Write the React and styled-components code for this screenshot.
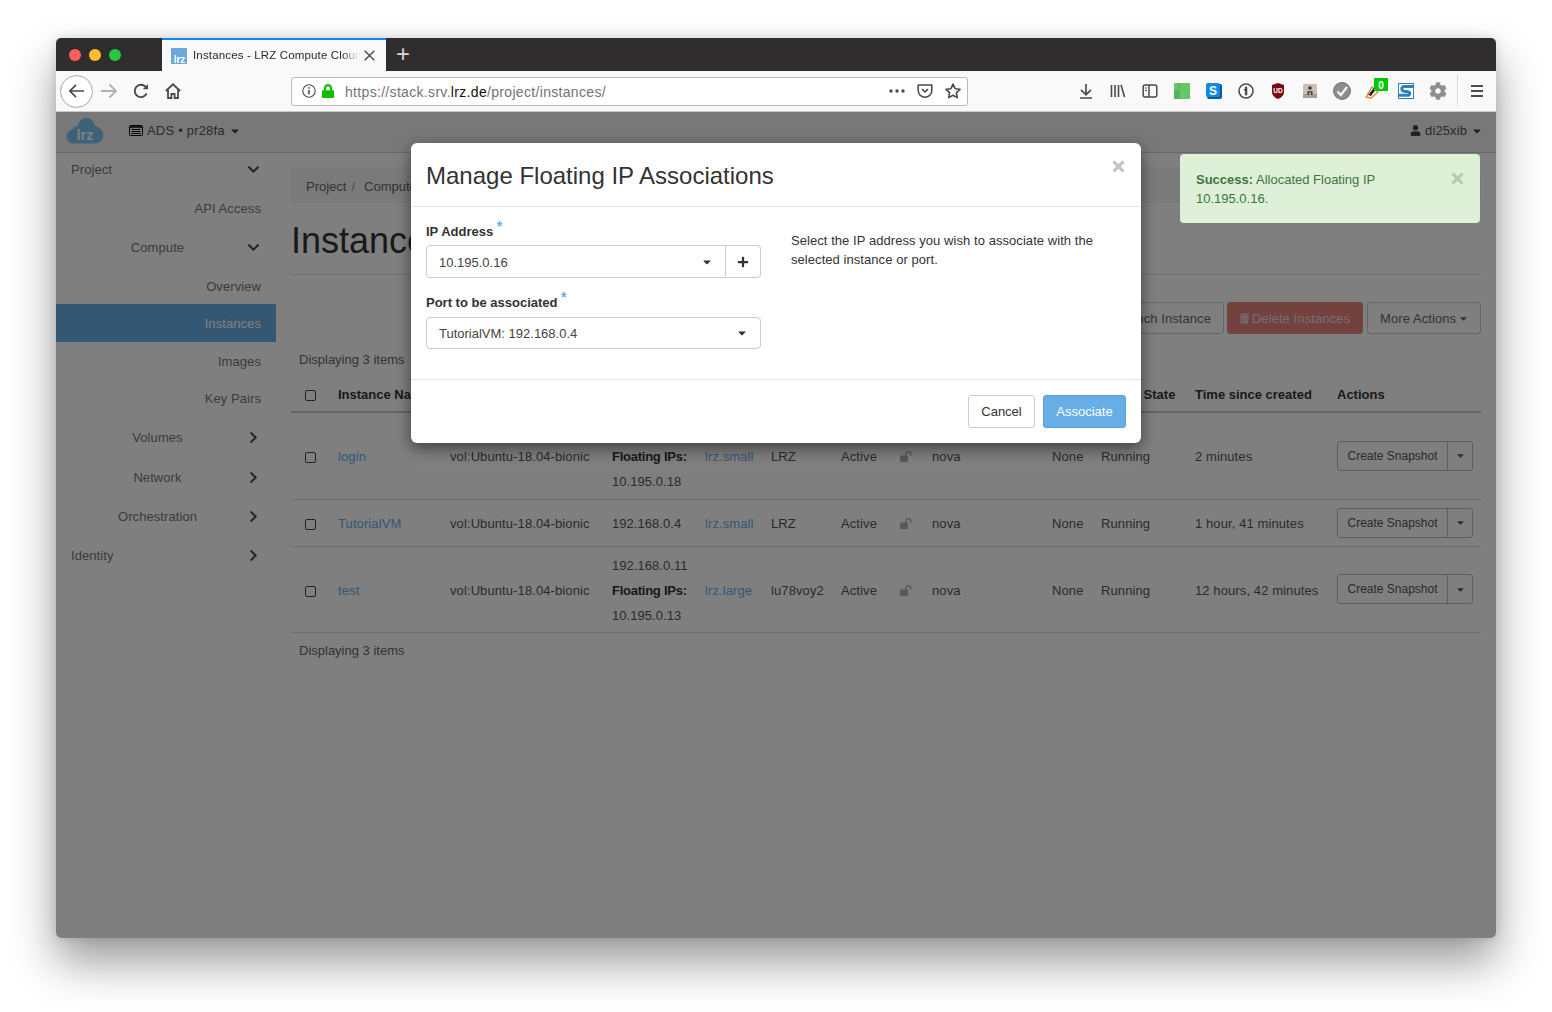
import React from 'react'
import styled, {createGlobalStyle} from 'styled-components'
import {
  FaCaretDown, FaChevronDown, FaChevronRight, FaCog, FaLock, FaPlus,
  FaTimes, FaTrashAlt, FaUser,
} from 'react-icons/fa'

const GlobalStyle = createGlobalStyle`
  html, body { margin: 0; padding: 0; background: #fff; }
  body { font-family: "Liberation Sans", Arial, sans-serif; font-size: 13px; color: #333; }
`

const sideItems = [
  {label: 'Project', align: 'left', icon: 'down', mt: 0},
  {label: 'API Access', align: 'right', mt: 7},
  {label: 'Compute', align: 'center', icon: 'down', mt: 7},
  {label: 'Overview', align: 'right', mt: 7},
  {label: 'Instances', align: 'right', active: true, mt: 2},
  {label: 'Images', align: 'right', mt: 3},
  {label: 'Key Pairs', align: 'right', mt: 5},
  {label: 'Volumes', align: 'center', icon: 'right', mt: 7},
  {label: 'Network', align: 'center', icon: 'right', mt: 8},
  {label: 'Orchestration', align: 'center', icon: 'right', mt: 7},
  {label: 'Identity', align: 'left', icon: 'right', mt: 7},
]

const instances = [
  {name: 'login', ip: ['192.168.0.3', 'Floating IPs:', '10.195.0.18'], size: 'lrz.small', key: 'LRZ', time: '2 minutes', h: 87},
  {name: 'TutorialVM', ip: ['192.168.0.4'], size: 'lrz.small', key: 'LRZ', time: '1 hour, 41 minutes', h: 47},
  {name: 'test', ip: ['192.168.0.11', 'Floating IPs:', '10.195.0.13'], size: 'lrz.large', key: 'lu78voy2', time: '12 hours, 42 minutes', h: 86},
]

const colWidths = [39, 112, 162, 93, 66, 70, 59, 32, 120, 49, 94, 142, 152]
const headers = ['', 'Instance Name', 'Image Name', 'IP Address', 'Size', 'Key Pair', 'Status', '', 'Availability Zone', 'Task', 'Power State', 'Time since created', 'Actions']

function BackIcon() {
  return <svg width="17" height="16" viewBox="0 0 18 16" fill="none" stroke="#4a4a4f" strokeWidth="1.8"><path d="M17 8H2M8.5 1.5 2 8l6.5 6.5" /></svg>
}
function ForwardIcon() {
  return <svg width="18" height="16" viewBox="0 0 18 16" fill="none" stroke="#b1b1b3" strokeWidth="1.8"><path d="M1 8h15M9.5 1.5 16 8l-6.5 6.5" /></svg>
}
function ReloadIcon() {
  return <svg width="16" height="16" viewBox="0 0 16 16" fill="none" stroke="#4a4a4f" strokeWidth="1.9"><path d="M13.6 10.5A6.2 6.2 0 1 1 12.4 3.6L14 5.4" /><path d="M15 1v5.2H9.8" fill="#4a4a4f" stroke="none" /></svg>
}
function HomeIcon() {
  return <svg width="16" height="16" viewBox="0 0 16 16" fill="none" stroke="#4a4a4f" strokeWidth="1.8"><path d="M.8 8 8 1.3 15.2 8" /><path d="M3 6.5V15h3.4v-4h3.2v4H13V6.5" /></svg>
}
function InfoIcon() {
  return <svg width="14" height="14" viewBox="0 0 14 14" fill="none" stroke="#4a4a4f" strokeWidth="1.1"><circle cx="7" cy="7" r="6.2" /><path d="M7 6v4.2" strokeWidth="1.6" /><path d="M7 3.2v1.6" strokeWidth="1.6" /></svg>
}
function DotsIcon() {
  return <svg width="16" height="4" viewBox="0 0 16 4" fill="#4a4a4f"><circle cx="2" cy="2" r="1.7" /><circle cx="8" cy="2" r="1.7" /><circle cx="14" cy="2" r="1.7" /></svg>
}
function PocketIcon() {
  return <svg width="16" height="16" viewBox="0 0 16 16" fill="none" stroke="#4a4a4f" strokeWidth="1.6"><path d="M1.2 2h13.6v5.5a6.8 6.8 0 0 1-13.6 0z" strokeLinejoin="round" /><path d="M5 6.2 8 9l3-2.8" /></svg>
}
function StarIcon() {
  return <svg width="16" height="16" viewBox="0 0 16 16" fill="none" stroke="#4a4a4f" strokeWidth="1.6" strokeLinejoin="round"><path d="m8 1.2 2.1 4.5 4.9.6-3.6 3.4.9 4.9L8 12.2l-4.3 2.4.9-4.9L1 6.3l4.9-.6z" /></svg>
}
function DownloadIcon() {
  return <svg width="16" height="16" viewBox="0 0 16 16" fill="none" stroke="#4a4a4f" strokeWidth="1.7"><path d="M8 1v10M3 6.8l5 5 5-5M2 15h12" /></svg>
}
function LibraryIcon() {
  return <svg width="16" height="16" viewBox="0 0 16 16" fill="none" stroke="#4a4a4f" strokeWidth="1.6"><path d="M1.5 2v12M5 2v12M8.5 2v12M11 2l3.6 12" /></svg>
}
function SidebarIcon() {
  return <svg width="16" height="16" viewBox="0 0 16 16" fill="none" stroke="#4a4a4f" strokeWidth="1.5"><rect x="1.2" y="2" width="13.6" height="12" rx="2" /><path d="M7 2v12" /><path d="M3 5h2M3 7.5h2" strokeWidth="1.2" /></svg>
}
function GreenExt() {
  return <svg width="16" height="16" viewBox="0 0 16 16"><rect width="16" height="16" fill="#66c766" /><rect x="0" y="7" width="5" height="9" fill="#53b653" /><path d="M5 0v16" stroke="#4ea84e" strokeWidth=".8" /></svg>
}
function SkypeExt() {
  return <svg width="16" height="16" viewBox="0 0 16 16"><rect x="1" y="1" width="15" height="15" rx="2" fill="#0a5a9c" /><rect width="14" height="14" rx="2" fill="#0d8be0" /><text x="7" y="11.5" fontSize="12" fontWeight="700" fill="#fff" textAnchor="middle" fontFamily="Liberation Sans">S</text></svg>
}
function OnePassExt() {
  return <svg width="16" height="16" viewBox="0 0 16 16"><circle cx="8" cy="8" r="7" fill="#fff" stroke="#4a4a4f" strokeWidth="1.6" /><rect x="6.9" y="3.5" width="2.4" height="9" rx="1" fill="#4a4a4f" /><path d="M5.8 6h2v1.4h-2z" fill="#4a4a4f" /></svg>
}
function UBlockExt() {
  return <svg width="16" height="16" viewBox="0 0 16 16"><path d="M8 0 14 2v7c0 3.5-3 5.8-6 7-3-1.2-6-3.500-6-7V2z" fill="#7a0a0e" /><text x="8" y="10" fontSize="6.500" fontWeight="700" fill="#fff" textAnchor="middle" fontFamily="Liberation Sans">UD</text></svg>
}
function TanExt() {
  return <svg width="16" height="16" viewBox="0 0 16 16"><rect x="1" y="1" width="14" height="14" rx="1.500" fill="#c9bfb6" /><rect x="1" y="11" width="14" height="4" fill="#a99e94" /><path d="M8 3.200a1.800 1.800 0 1 1 0 3.600 1.800 1.800 0 0 1 0-3.600M5.500 12V8.200h5V12h-1.500V9.500h-2V12z" fill="#3d3530" /></svg>
}
function CheckExt() {
  return <svg width="18" height="18" viewBox="0 0 16 16"><circle cx="8" cy="8" r="7.500" fill="#8d8d8d" stroke="#666" strokeWidth=".8" /><path d="m4 8.500 3 3 5.500-7" fill="none" stroke="#f2f2f2" strokeWidth="2" /></svg>
}
function PenExt() {
  return (
    <svg width="24" height="22" viewBox="0 0 24 22">
      <path d="M2 19 8 9l6 5-7 6z" fill="#fff" stroke="#e8843c" strokeWidth="1.300" />
      <path d="M4 17 12 7l2 2-7 9z" fill="#2e2e2e" />
      <rect x="10" y="0" width="14" height="13" fill="#00c800" />
      <text x="17" y="10.500" fontSize="10" fontWeight="700" fill="#fff" textAnchor="middle" fontFamily="Liberation Sans">0</text>
    </svg>
  )
}
function StackExt() {
  return <svg width="16" height="16" viewBox="0 0 16 16"><rect x=".5" y=".5" width="15" height="15" fill="#fff" stroke="#2f7fbf" /><path d="M16 3.500H6.500C3 3.500 3 7.800 6 8.200l4 .6c2.500.4 2 3.500-.5 3.500H0" fill="none" stroke="#2f7fbf" strokeWidth="3" /></svg>
}
function MenuIcon() {
  return <svg width="14" height="14" viewBox="0 0 14 14" stroke="#4a4a4f" strokeWidth="1.800"><path d="M1 2h12M1 7h12M1 12h12" /></svg>
}
function TabCloseIcon() {
  return <svg width="11" height="11" viewBox="0 0 11 11" stroke="#4a4a4f" strokeWidth="1.400"><path d="m.7.700 9.600 9.600M10.300.700.700 10.300" /></svg>
}
function OpenLock() {
  return <svg width="13" height="11" viewBox="0 0 13 11"><rect x="0" y="4.500" width="8" height="6.500" rx=".8" fill="#b0b0b0" /><path d="M6 4.800V3a2.400 2.400 0 0 1 4.800 0v1.500" fill="none" stroke="#b0b0b0" strokeWidth="1.500" /></svg>
}
function Favicon() {
  return <svg width="16" height="16" viewBox="0 0 16 16"><rect width="16" height="16" fill="#6aa9dc" /><text x="8.500" y="14.500" fontSize="10" fontWeight="700" fill="#fff" textAnchor="middle" fontFamily="Liberation Sans">lrz</text></svg>
}
function Logo() {
  return (
    <svg width="38" height="27" viewBox="0 0 38 28">
      <path d="M7 27.500C3 27.500 0 24.500 0 20.500s3-7 6-7.500c1-2.500 3-3.500 5-3C13 4 16 1 20 1c5 0 8.500 3.500 9.500 8.500 4 .5 8.500 4 8.500 9 0 5-3.500 9-8.500 9z" fill="#7cc3f5" />
      <text x="19" y="24" fontSize="15" fontWeight="700" fill="#fff" textAnchor="middle" fontFamily="Liberation Sans">lrz</text>
    </svg>
  )
}
function ListIcon() {
  return <svg width="14" height="11" viewBox="0 0 14 11"><rect x=".5" y=".5" width="13" height="10" rx="1" fill="none" stroke="#000" /><path d="M.5 2h13" stroke="#000" strokeWidth="1.500" /><path d="M2.500 4.500h9M2.500 6.500h9M2.500 8.500h9" stroke="#000" /></svg>
}

export default function App() {
  return (
    <Page>
      <GlobalStyle />
      <BrowserWindow>
        <TabStrip>
          <Lights>
            <Light $color="#ff5f57" />
            <Light $color="#febc2e" />
            <Light $color="#28c840" />
          </Lights>
          <Tab>
            <Favicon />
            <TabTitle>Instances - LRZ Compute Cloud</TabTitle>
            <TabClose><TabCloseIcon /></TabClose>
          </Tab>
          <NewTab>+</NewTab>
        </TabStrip>

        <Toolbar>
          <BackButton><BackIcon /></BackButton>
          <ToolIcon><ForwardIcon /></ToolIcon>
          <ToolIcon><ReloadIcon /></ToolIcon>
          <ToolIcon><HomeIcon /></ToolIcon>
          <UrlBar>
            <InfoIcon />
            <GreenLock><FaLock /></GreenLock>
            <UrlText>https://stack.srv.<b>lrz.de</b>/project/instances/</UrlText>
            <UrlDots><DotsIcon /></UrlDots>
            <UrlAction><PocketIcon /></UrlAction>
            <UrlAction><StarIcon /></UrlAction>
          </UrlBar>
          <ToolSpacer />
          <ToolIcon><DownloadIcon /></ToolIcon>
          <ToolIcon><LibraryIcon /></ToolIcon>
          <ToolIcon><SidebarIcon /></ToolIcon>
          <ToolIcon><GreenExt /></ToolIcon>
          <ToolIcon><SkypeExt /></ToolIcon>
          <ToolIcon><OnePassExt /></ToolIcon>
          <ToolIcon><UBlockExt /></ToolIcon>
          <ToolIcon><TanExt /></ToolIcon>
          <ToolIcon><CheckExt /></ToolIcon>
          <ToolIcon><BadgedIcon><PenExt /></BadgedIcon></ToolIcon>
          <ToolIcon><StackExt /></ToolIcon>
          <ToolIcon><GearWrap><FaCog /></GearWrap></ToolIcon>
          <ToolDivider />
          <MenuSlot><MenuIcon /></MenuSlot>
        </Toolbar>

        <Viewport>
          <TopNav>
            <Logo />
            <ProjectPicker><ListIcon /> ADS • pr28fa <FaCaretDown /></ProjectPicker>
            <UserMenu><FaUser /> di25xib <FaCaretDown /></UserMenu>
          </TopNav>

          <Columns>
            <Sidebar>
              {sideItems.map((item) => (
                <SideRow key={item.label} $active={item.active} $mt={item.mt}>
                  <SideLabel $align={item.align}>{item.label}</SideLabel>
                  {item.icon && (
                    <SideChevron>
                      {item.icon === 'down' ? <FaChevronDown /> : <FaChevronRight />}
                    </SideChevron>
                  )}
                </SideRow>
              ))}
            </Sidebar>

            <Main>
              <Breadcrumb>Project<Sep>/</Sep>Compute<Sep>/</Sep>Instances</Breadcrumb>
              <PageHeader><h1>Instances</h1></PageHeader>
              <Actions>
                <Button>Launch Instance</Button>
                <DangerButton><FaTrashAlt /> Delete Instances</DangerButton>
                <MoreButton>More Actions <FaCaretDown /></MoreButton>
              </Actions>
              <Count>Displaying 3 items</Count>
              <Table>
                <colgroup>
                  {colWidths.map((w, i) => <col key={i} style={{width: w}} />)}
                </colgroup>
                <thead>
                  <tr>
                    {headers.map((h, i) => (
                      <th key={i}>{i === 0 ? <Check type="checkbox" /> : h}</th>
                    ))}
                  </tr>
                </thead>
                <tbody>
                  {instances.map((row) => (
                    <Row key={row.name} $h={row.h}>
                      <td><Check type="checkbox" /></td>
                      <td><Link>{row.name}</Link></td>
                      <td>vol:Ubuntu-18.04-bionic</td>
                      <td>
                        {row.ip.map((line) => (
                          <IpLine key={line} $label={line.endsWith(':')}>{line}</IpLine>
                        ))}
                      </td>
                      <td><Link>{row.size}</Link></td>
                      <td>{row.key}</td>
                      <td>Active</td>
                      <td><LockWrap><OpenLock /></LockWrap></td>
                      <td>nova</td>
                      <td>None</td>
                      <td>Running</td>
                      <td>{row.time}</td>
                      <td>
                        <SplitButton>
                          <SplitMain>Create Snapshot</SplitMain>
                          <SplitCaret><FaCaretDown /></SplitCaret>
                        </SplitButton>
                      </td>
                    </Row>
                  ))}
                </tbody>
              </Table>
              <Count $bottom>Displaying 3 items</Count>
            </Main>
          </Columns>

          <Backdrop />

          <Alert>
            <div><strong>Success:</strong> Allocated Floating IP 10.195.0.16.</div>
            <AlertClose><FaTimes /></AlertClose>
          </Alert>

          <Modal>
            <ModalHeader>
              <ModalTitle>Manage Floating IP Associations</ModalTitle>
              <ModalClose><FaTimes /></ModalClose>
            </ModalHeader>
            <ModalBody>
              <FormColumn>
                <Label>IP Address <Req>*</Req></Label>
                <InputGroup>
                  <SelectBox $grow>10.195.0.16<FaCaretDown /></SelectBox>
                  <AddButton><FaPlus /></AddButton>
                </InputGroup>
                <Label $second>Port to be associated <Req>*</Req></Label>
                <SelectBox $full>TutorialVM: 192.168.0.4<FaCaretDown /></SelectBox>
              </FormColumn>
              <HelpText>Select the IP address you wish to associate with the selected instance or port.</HelpText>
            </ModalBody>
            <ModalFooter>
              <CancelButton>Cancel</CancelButton>
              <PrimaryButton>Associate</PrimaryButton>
            </ModalFooter>
          </Modal>
        </Viewport>
      </BrowserWindow>
    </Page>
  )
}

const Page = styled.div`
  width: 1552px;
  height: 1012px;
  padding: 38px 56px 0;
  box-sizing: border-box;
  overflow: hidden;
  background: #fff;
`

const BrowserWindow = styled.div`
  width: 1440px;
  height: 900px;
  border-radius: 5px;
  overflow: hidden;
  display: flex;
  flex-direction: column;
  box-shadow: 0 24px 46px rgba(0, 0, 0, 0.4), 0 0 12px rgba(0, 0, 0, 0.12);
`

const TabStrip = styled.div`
  height: 33px;
  flex: none;
  display: flex;
  background: #2f2d2e;
`

const Lights = styled.div`
  width: 106px;
  display: flex;
  align-items: center;
  gap: 8px;
  padding-left: 13px;
  box-sizing: border-box;
`

const Light = styled.span`
  width: 12px;
  height: 12px;
  border-radius: 50%;
  background: ${(p) => p.$color};
`

const Tab = styled.div`
  width: 224px;
  box-sizing: border-box;
  border-top: 2px solid #0a84ff;
  background: #f9f9fa;
  display: flex;
  align-items: center;
  padding-left: 9px;
  position: relative;
`

const TabTitle = styled.span`
  margin-left: 6px;
  padding-bottom: 2px;
  width: 166px;
  overflow: hidden;
  white-space: nowrap;
  font-size: 11.5px;
  letter-spacing: 0.15px;
  color: #2a2a2e;
  -webkit-mask-image: linear-gradient(90deg, #000 90%, transparent);
  mask-image: linear-gradient(90deg, #000 90%, transparent);
`

const TabClose = styled.span`
  margin-left: 5px;
  display: flex;
`

const NewTab = styled.span`
  width: 34px;
  text-align: center;
  font-size: 24px;
  line-height: 31px;
  font-weight: 300;
  color: #d7d7db;
`

const Toolbar = styled.div`
  height: 41px;
  flex: none;
  box-sizing: border-box;
  border-bottom: 1px solid #c9c9cb;
  background: #f9f9fa;
  display: flex;
  align-items: center;
  padding-left: 4px;
`

const BackButton = styled.div`
  width: 33px;
  height: 33px;
  border: 1px solid #a8a8aa;
  border-radius: 50%;
  background: #fff;
  box-sizing: border-box;
  display: flex;
  align-items: center;
  justify-content: center;
  padding-right: 1px;
`

const ToolIcon = styled.div`
  width: 32px;
  height: 32px;
  flex: none;
  display: flex;
  align-items: center;
  justify-content: center;
`

const BadgedIcon = styled.span`
  display: flex;
  margin: -5px 0 0 4px;
`

const UrlBar = styled.div`
  width: 677px;
  height: 29px;
  margin-left: 102px;
  box-sizing: border-box;
  border: 1px solid #b9b9bb;
  border-radius: 3px;
  background: #fff;
  display: flex;
  align-items: center;
  padding-left: 10px;
`

const GreenLock = styled.span`
  display: flex;
  margin-left: 5px;
  font-size: 14px;
  color: #12bc00;
`

const UrlText = styled.span`
  margin-left: 10px;
  padding-top: 2px;
  flex: 1;
  font-size: 14px;
  color: #737373;
  letter-spacing: 0.32px;
  b {
    font-weight: 400;
    color: #111;
  }
`

const UrlDots = styled.span`
  display: flex;
  margin-right: 6px;
`

const UrlAction = styled.span`
  width: 28px;
  display: flex;
  justify-content: center;
`

const ToolSpacer = styled.div`
  width: 102px;
  flex: none;
`

const GearWrap = styled.span`
  display: flex;
  font-size: 18px;
  color: #8f8f8f;
`

const ToolDivider = styled.div`
  width: 1px;
  height: 32px;
  margin-left: 3px;
  background: #dcdcde;
`

const MenuSlot = styled.div`
  width: 37px;
  display: flex;
  justify-content: center;
`

const Viewport = styled.div`
  flex: 1;
  position: relative;
  background: #fff;
  display: flex;
  flex-direction: column;
  min-height: 0;
`

const TopNav = styled.div`
  height: 41px;
  flex: none;
  box-sizing: border-box;
  border-bottom: 1px solid #cfcfcf;
  background: #f0f0f0;
  display: flex;
  align-items: center;
  padding: 0 13px 3px 10px;
  color: #555;
`

const ProjectPicker = styled.div`
  margin-left: 25px;
  display: flex;
  align-items: center;
  gap: 4px;
  font-size: 13px;
  letter-spacing: 0.2px;
  svg:last-child {
    font-size: 12px;
    color: #444;
  }
`

const UserMenu = styled.div`
  margin-left: auto;
  display: flex;
  align-items: center;
  gap: 4px;
  letter-spacing: 0.1px;
  svg:first-child {
    font-size: 11px;
    color: #444;
  }
  svg:last-child {
    font-size: 12px;
    color: #444;
  }
`

const Columns = styled.div`
  flex: 1;
  display: flex;
  min-height: 0;
`

const Sidebar = styled.nav`
  width: 220px;
  flex: none;
  font-size: 13px;
`

const SideRow = styled.div`
  height: ${(p) => (p.$active ? 38 : 32)}px;
  margin-top: ${(p) => p.$mt}px;
  display: flex;
  align-items: center;
  padding: 0 15px;
  background: ${(p) => (p.$active ? '#68aee6' : 'transparent')};
  color: ${(p) => (p.$active ? '#fff' : '#777')};
  letter-spacing: 0.08px;
`

const SideLabel = styled.span`
  flex: 1;
  text-align: ${(p) => p.$align};
`

const SideChevron = styled.span`
  width: 16px;
  margin-right: 1px;
  display: flex;
  justify-content: flex-end;
  font-size: 13px;
  color: #444;
`

const Main = styled.main`
  flex: 1;
  padding: 14px 15px 0;
  min-width: 0;
`

const Breadcrumb = styled.div`
  height: 36px;
  line-height: 39px;
  border-radius: 4px;
  background: #f5f5f5;
  padding-left: 15px;
  color: #666;
`

const Sep = styled.span`
  padding: 0 9px 0 5px;
  color: #999;
`

const PageHeader = styled.div`
  height: 72px;
  box-sizing: border-box;
  border-bottom: 1px solid #dedede;
  h1 {
    margin: 0;
    padding-top: 18px;
    font-size: 36px;
    line-height: 40px;
    font-weight: 400;
    color: #333;
  }
`

const Actions = styled.div`
  margin-top: 27px;
  display: flex;
  justify-content: flex-end;
  gap: 3px;
`

const Button = styled.div`
  height: 32px;
  box-sizing: border-box;
  border: 1px solid #ccc;
  border-radius: 3px;
  padding: 0 12px;
  display: flex;
  align-items: center;
  gap: 3px;
  color: #666;
  white-space: nowrap;
  letter-spacing: 0.08px;
`

const DangerButton = styled(Button)`
  width: 136px;
  background: #e6847f;
  border-color: #e6847f;
  color: #f2dada;
  margin-right: 1px;
  svg {
    font-size: 11px;
  }
`

const MoreButton = styled(Button)`
  width: 114px;
  svg {
    font-size: 11px;
  }
`

const Count = styled.div`
  padding: ${(p) => (p.$bottom ? '10px 8px' : '18px 8px 10px')};
  line-height: 16px;
  color: #666;
`

const Table = styled.table`
  width: 1190px;
  table-layout: fixed;
  border-collapse: collapse;
  color: #555;
  th {
    height: 34px;
    box-sizing: border-box;
    padding: 0 8px;
    text-align: left;
    font-size: 13px;
    white-space: nowrap;
    overflow: hidden;
    color: #333;
    border-bottom: 2px solid #ccc;
  }
  th:first-child,
  td:first-child {
    padding-left: 14px;
  }
`

const Row = styled.tr`
  height: ${(p) => p.$h}px;
  border-bottom: 1px solid #ddd;
  td {
    padding: 0 8px;
    white-space: nowrap;
    vertical-align: middle;
    box-sizing: border-box;
    letter-spacing: 0.1px;
  }
  td:not(:last-child) {
    padding-top: 2px;
  }
`

const Check = styled.input`
  appearance: none;
  display: block;
  width: 11px;
  height: 11px;
  margin: 2px 0 0;
  box-sizing: border-box;
  border: 1.5px solid #444;
  border-radius: 2px;
  background: #fff;
`

const Link = styled.span`
  color: #68aee6;
`

const IpLine = styled.div`
  line-height: 25px;
  font-weight: ${(p) => (p.$label ? 700 : 400)};
  letter-spacing: ${(p) => (p.$label ? '-0.25px' : '0.05px')};
  color: ${(p) => (p.$label ? '#333' : '#555')};
`

const LockWrap = styled.span`
  display: flex;
`

const SplitButton = styled.div`
  display: flex;
  width: 136px;
  height: 30px;
  box-sizing: border-box;
  border: 1px solid #bbb;
  border-radius: 3px;
  font-size: 12px;
  letter-spacing: 0;
  color: #555;
`

const SplitMain = styled.span`
  flex: 1;
  display: flex;
  align-items: center;
  justify-content: center;
  border-right: 1px solid #bbb;
`

const SplitCaret = styled.span`
  width: 24px;
  display: flex;
  align-items: center;
  justify-content: center;
  font-size: 11px;
`

const Backdrop = styled.div`
  position: absolute;
  inset: 0;
  background: rgba(0, 0, 0, 0.5);
`

const Alert = styled.div`
  position: absolute;
  top: 42px;
  right: 16px;
  width: 300px;
  height: 69px;
  box-sizing: border-box;
  border-radius: 4px;
  background: #dff0d8;
  color: #3c763d;
  padding: 16px 16px;
  line-height: 19px;
  display: flex;
  strong {
    font-weight: 700;
  }
  div {
    width: 215px;
  }
`

const AlertClose = styled.span`
  position: absolute;
  top: 16px;
  right: 14px;
  font-size: 17px;
  line-height: 1;
  color: #b7cbb0;
`

const Modal = styled.div`
  position: absolute;
  top: 31px;
  left: 355px;
  width: 730px;
  height: 300px;
  border-radius: 6px;
  background: #fff;
  box-shadow: 0 5px 15px rgba(0, 0, 0, 0.5);
  display: flex;
  flex-direction: column;
  color: #333;
`

const ModalHeader = styled.div`
  height: 64px;
  flex: none;
  box-sizing: border-box;
  border-bottom: 1px solid #e5e5e5;
  display: flex;
  padding: 0 15px;
  position: relative;
`

const ModalTitle = styled.h4`
  margin: 0;
  padding-top: 18px;
  font-size: 24px;
  line-height: 30px;
  font-weight: 400;
`

const ModalClose = styled.span`
  position: absolute;
  top: 15px;
  right: 14px;
  font-size: 17px;
  line-height: 1;
  color: #c4c4c4;
`

const ModalBody = styled.div`
  height: 173px;
  flex: none;
  box-sizing: border-box;
  border-bottom: 1px solid #e5e5e5;
  display: flex;
  padding: 0 15px;
`

const FormColumn = styled.div`
  width: 335px;
  flex: none;
`

const Label = styled.div`
  margin-top: 16px;
  height: ${(p) => (p.$second ? 23 : 22)}px;
  line-height: 18px;
  font-weight: 700;
  color: #333;
`

const Req = styled.sup`
  color: #68aee6;
  font-size: 14px;
  line-height: 0;
`

const InputGroup = styled.div`
  display: flex;
  height: 33px;
`

const SelectBox = styled.div`
  box-sizing: border-box;
  height: ${(p) => (p.$full ? 32 : 33)}px;
  flex: ${(p) => (p.$grow ? 1 : 'none')};
  border: 1px solid #ccc;
  border-radius: ${(p) => (p.$grow ? '4px 0 0 4px' : '4px')};
  display: flex;
  align-items: center;
  justify-content: space-between;
  padding: ${(p) => (p.$grow ? '1px 12px 0' : '0 12px')};
  color: #444;
  svg {
    font-size: 12px;
    color: #333;
  }
`

const AddButton = styled.div`
  width: 35px;
  box-sizing: border-box;
  border: 1px solid #ccc;
  border-left: none;
  border-radius: 0 4px 4px 0;
  display: flex;
  align-items: center;
  justify-content: center;
  font-size: 12px;
  color: #333;
`

const HelpText = styled.p`
  margin: 24px 0 0 30px;
  width: 320px;
  line-height: 19px;
  letter-spacing: 0.06px;
  color: #333;
`

const ModalFooter = styled.div`
  flex: 1;
  display: flex;
  justify-content: flex-end;
  align-items: flex-start;
  gap: 8px;
  padding: 15px 15px 0;
`

const CancelButton = styled.div`
  width: 67px;
  height: 33px;
  box-sizing: border-box;
  border: 1px solid #ccc;
  border-radius: 3px;
  display: flex;
  align-items: center;
  justify-content: center;
`

const PrimaryButton = styled.div`
  width: 83px;
  height: 33px;
  box-sizing: border-box;
  border: 1px solid #5a9fd8;
  border-radius: 3px;
  background: #68aee6;
  color: #fff;
  display: flex;
  align-items: center;
  justify-content: center;
`
